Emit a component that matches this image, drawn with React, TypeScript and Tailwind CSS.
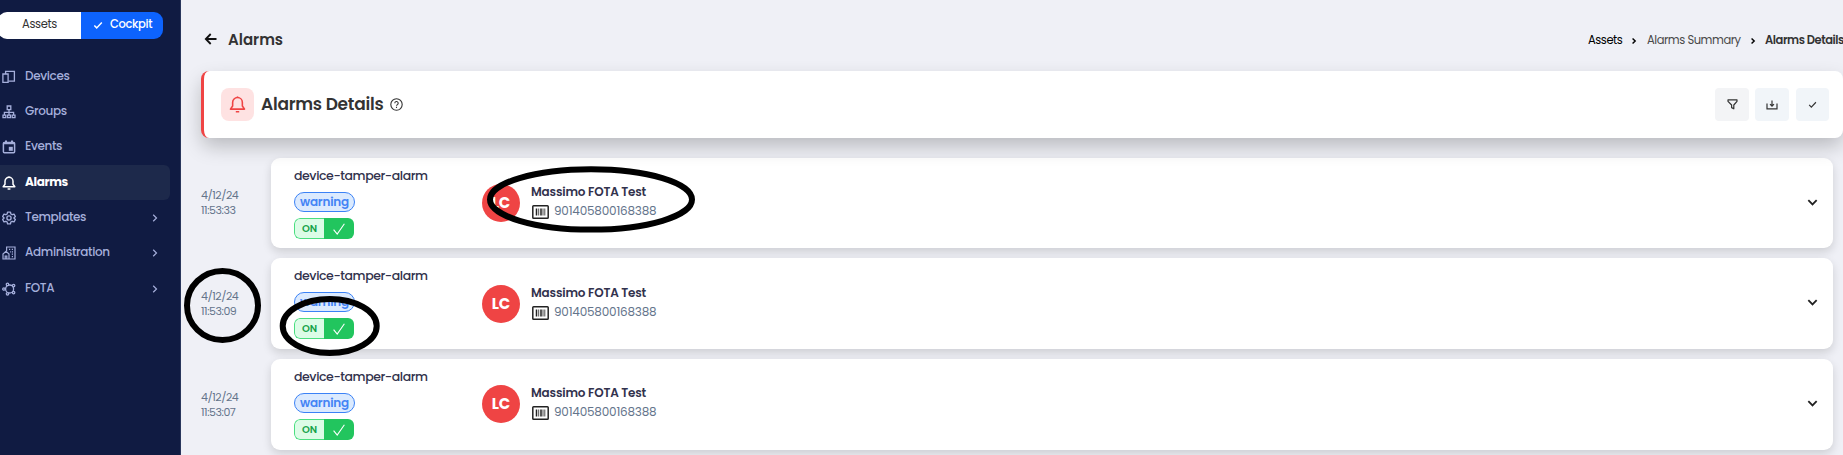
import type { ReactNode } from "react";

interface NavItem {
  label: string;
  icon: ReactNode;
  row: string;
  hasChildren?: boolean;
  active?: boolean;
}

interface Alarm {
  time: string;
  card: string;
  avatar: string;
  device: string;
}

const DevicesIcon = () => (
  <svg width="14" height="14" viewBox="0 0 14 14" fill="none" stroke="currentColor" strokeWidth="1.3">
    <path d="M3.6 4V1.3h8.8v9.8H6.4" />
    <path d="M.9 4h5.2v8.4H.9z" />
  </svg>
);

const GroupsIcon = () => (
  <svg width="14" height="14" viewBox="0 0 14 14" fill="none" stroke="currentColor" strokeWidth="1.3">
    <path d="M5.2 1h3.6v3.6H5.2zM7 4.600V10M2.400 10V7.300h9.200V10" />
    <path d="M1 10.200h2.800v2.400H1zM5.600 10.200h2.800v2.400H5.600zM10.200 10.200H13v2.400h-2.800z" />
  </svg>
);

const EventsIcon = () => (
  <svg width="14" height="14" viewBox="0 0 14 14" fill="none" stroke="currentColor" strokeWidth="1.5">
    <rect x="1.4" y="2.4" width="11.2" height="10.4" rx="1" />
    <path d="M1.4 3.2h11.2M4 .6v2M10 .6v2" strokeWidth="2" />
    <path d="M6.8 6.8h4v4h-4z" fill="currentColor" stroke="none" />
  </svg>
);

const BellIcon = ({ size = 14, width = 1.5 }: { size?: number; width?: number }) => (
  <svg width={size} height={size} viewBox="0 0 14 14" fill="none" stroke="currentColor" strokeWidth={width} strokeLinejoin="round">
    <path d="M7 1.3a4 4 0 0 0-4 4v2.900L1.200 10.800h11.600L11 8.200V5.300a4 4 0 0 0-4-4z" />
    <path d="M7 1.3V.5M5.600 12.900h2.800" />
  </svg>
);

const GearIcon = () => (
  <svg width="14" height="14" viewBox="0 0 24 24" fill="none" stroke="currentColor" strokeWidth="2.3" strokeLinejoin="round">
    <path d="M9.500 1.800h5l.7 3.300 2.200 1.300 3.200-1.100 2.300 4.200L20.400 12l2.500 2.500-2.300 4.200-3.200-1.100-2.200 1.300-.7 3.300h-5l-.7-3.300-2.200-1.300-3.200 1.100-2.300-4.200L3.600 12 1.100 9.500l2.300-4.200 3.200 1.100 2.200-1.300z" />
    <circle cx="12" cy="12" r="3.6" />
  </svg>
);

const BuildingIcon = () => (
  <svg width="14" height="14" viewBox="0 0 14 14" fill="none" stroke="currentColor" strokeWidth="1.2">
    <path d="M4.600 5V1h8.400v12H1V8l3-2.600L7 8v5" />
    <path d="M3.200 13v-3h1.600v3M7 3.400h1.200M9.800 3.400H11M8 5.800h.8M9.800 5.800H11M9.800 8.200H11M9.800 10.600H11" />
  </svg>
);

const FotaIcon = () => (
  <svg width="14" height="14" viewBox="0 0 14 14" fill="none" stroke="currentColor" strokeWidth="1.3">
    <circle cx="7.6" cy="7" r="4" />
    <g fill="#101b42">
      <circle cx="1.9" cy="7" r="1.2" />
      <circle cx="5.5" cy="2.4" r="1.2" />
      <circle cx="11.6" cy="3.6" r="1.2" />
      <circle cx="11.6" cy="10.6" r="1.2" />
      <circle cx="5.5" cy="11.8" r="1.2" />
    </g>
  </svg>
);

const Chevron = ({ className = "", width = 1.5 }: { className?: string; width?: number }) => (
  <svg className={className} viewBox="0 0 10 10" fill="none" stroke="currentColor" strokeWidth={width}>
    <path d="M3.2 1.8 6.5 5 3.2 8.2" />
  </svg>
);

const Check = ({ className = "", width = 1.5 }: { className?: string; width?: number }) => (
  <svg className={className} viewBox="0 0 10 10" fill="none" stroke="currentColor" strokeWidth={width}>
    <path d="M1.3 5.5 3.7 7.9 8.8 2.5" />
  </svg>
);

const navItems: NavItem[] = [
  { label: "Devices", icon: <DevicesIcon />, row: "h-[35px]" },
  { label: "Groups", icon: <GroupsIcon />, row: "h-[35px]" },
  { label: "Events", icon: <EventsIcon />, row: "h-[36px]" },
  { label: "Alarms", icon: <BellIcon />, row: "h-[35px]", active: true },
  { label: "Templates", icon: <GearIcon />, row: "h-[35px]", hasChildren: true },
  { label: "Administration", icon: <BuildingIcon />, row: "h-[36px]", hasChildren: true },
  { label: "FOTA", icon: <FotaIcon />, row: "h-[35px]", hasChildren: true },
];

const alarms: Alarm[] = [
  { time: "11:53:33", card: "h-[90px]", avatar: "mt-[26px]", device: "pt-[25px]" },
  { time: "11:53:09", card: "h-[91px]", avatar: "mt-[27px]", device: "pt-[26px]" },
  { time: "11:53:07", card: "h-[91px]", avatar: "mt-[26px]", device: "pt-[25px]" },
];

function Sidebar() {
  return (
    <aside className="h-full w-[181px] shrink-0 border-r border-[#29365c] bg-[#101b42] pt-3">
      <div className="-ml-0.5 flex h-[27px] w-[165px] overflow-hidden rounded-[9px] text-[11.5px] leading-none tracking-[-0.35px]">
        <div className="flex flex-1 items-center bg-white pb-px pl-6 text-[#333]">Assets</div>
        <div className="flex w-[82px] items-center bg-[#0d63fd] pb-px pl-3 font-medium text-white">
          <Check className="mb-px size-[10px]" />
          <span className="ml-[7px]">Cockpit</span>
        </div>
      </div>
      <nav className="mt-5 w-[170px]">
        {navItems.map((item) => (
          <div
            key={item.label}
            className={`flex items-center rounded-r-md pr-2.5 pl-0.5 text-[12px] tracking-[-0.36px] ${item.row} ${
              item.active ? "bg-[#1d294b] font-bold text-white" : "font-medium text-[#a5afdb]"
            }`}
          >
            {item.icon}
            <span className="ml-[9px] pb-0.5">{item.label}</span>
            {item.hasChildren && <Chevron className="ml-auto size-[10px]" width={1.2} />}
          </div>
        ))}
      </nav>
    </aside>
  );
}

function TopBar() {
  return (
    <div className="flex h-[71px] items-center pt-2 pl-[3px] text-[#333]">
      <svg className="mb-px" width="13" height="12" viewBox="0 0 13 12" fill="none" stroke="#111" strokeWidth="1.8">
        <path d="M12.500 6H2M6.700 1 1.800 6l4.900 5" />
      </svg>
      <h1 className="mt-0.5 ml-[11px] text-[15px] font-semibold">Alarms</h1>
      <div className="ml-auto flex shrink-0 items-center pt-0.5 text-[11.5px] tracking-[-0.45px] whitespace-nowrap">
        <span className="w-[42px] text-black">Assets</span>
        <Chevron className="mr-[9px] size-2 shrink-0 text-black" width={1.8} />
        <span className="w-[102px] text-[#4a4a4a]">Alarms Summary</span>
        <Chevron className="mr-2 size-2 shrink-0 text-black" width={1.8} />
        <span className="w-[78px] font-semibold">Alarms Details</span>
      </div>
    </div>
  );
}

function PageBanner() {
  return (
    <div className="relative flex h-[67px] items-center rounded-lg border-l-3 border-[#ef4444] bg-white pr-3.5 pl-[17px] shadow-[0_9px_20px_-1px_rgba(0,0,0,0.23)]">
      <div className="flex size-[33px] items-center justify-center rounded-lg bg-[#fee2e2] text-[#ef4444]">
        <BellIcon size={17} width={1.3} />
      </div>
      <h2 className="ml-[7px] text-[17px] font-semibold tracking-[-0.25px] text-[#333]">Alarms Details</h2>
      <svg className="ml-[7px]" width="13" height="13" viewBox="0 0 13 13" fill="none" stroke="#333" strokeWidth="1.1">
        <circle cx="6.5" cy="6.5" r="5.7" />
        <path d="M4.8 5.2a1.700 1.700 0 1 1 2.500 1.500c-.6.300-.8.500-.8 1.100M6.500 8.800v1.100" />
      </svg>
      <div className="ml-auto flex text-[#333]">
        <div className="flex h-[33px] w-[34px] items-center justify-center rounded bg-[#f3f4f6]">
          <svg width="11" height="11" viewBox="0 0 11 11" fill="none" stroke="currentColor" strokeWidth="1.2" strokeLinejoin="round">
            <path d="M1 .8h9v1.500L6.800 6v3.800L4.600 8.600V6L1 2.300z" />
          </svg>
        </div>
        <div className="ml-1.5 flex h-[33px] w-[34px] items-center justify-center rounded bg-[#f1f5f9]">
          <svg width="12" height="10" viewBox="0 0 12 10" fill="none" stroke="currentColor" strokeWidth="1.2">
            <path d="M1 3.400V8.800h10V3.400M6 .4v5.800M4 4.200l2 2 2-2" />
          </svg>
        </div>
        <div className="ml-[7px] flex size-[33px] items-center justify-center rounded bg-[#f1f5f9]">
          <Check className="size-[9px]" width={1.3} />
        </div>
      </div>
    </div>
  );
}

function AlarmRow({ alarm }: { alarm: Alarm }) {
  return (
    <div className="flex items-center">
      <div className="w-[70px] text-[11px] leading-[15px] tracking-[-0.45px] text-[#64748b]">
        <p>4/12/24</p>
        <p>{alarm.time}</p>
      </div>
      <div className={`flex w-[1562px] rounded-[9px] bg-white pl-[23px] shadow-[0_4px_10px_rgba(0,0,0,0.14)] ${alarm.card}`}>
        <div className="w-[188px] pt-[9px]">
          <p className="text-[12.5px] leading-[18px] font-medium tracking-[-0.42px] whitespace-nowrap text-[#32324d]">
            device-tamper-alarm
          </p>
          <span className="mt-[7px] flex h-5 w-[61px] items-center justify-center rounded-full border border-[#3b82f6] bg-[#dbeafe] pb-px text-[12px] font-semibold tracking-[-0.2px] text-[#4484f5]">
            warning
          </span>
          <div className="mt-[6px] flex h-[21px] w-[60px] overflow-hidden rounded-md text-[10px]">
            <span className="flex w-[30px] items-center justify-center rounded-l-md border border-r-0 border-[#4ade80] bg-[#dcfce7] font-semibold text-[#16a34a]">
              ON
            </span>
            <span className="flex flex-1 items-center justify-center bg-[#22c55e] text-white">
              <svg width="12" height="12" viewBox="0 0 12 12" fill="none" stroke="currentColor" strokeWidth="1.1">
                <path d="M.6 6.600 4.200 11 11.400.8" />
              </svg>
            </span>
          </div>
        </div>
        <div
          className={`flex size-[38px] items-center justify-center rounded-full bg-[#ef4444] text-[15px] font-bold text-white ${alarm.avatar}`}
        >
          LC
        </div>
        <div className={`ml-[11px] ${alarm.device}`}>
          <p className="text-[12px] leading-[18px] font-semibold tracking-[-0.18px] text-[#32324d]">Massimo FOTA Test</p>
          <div className="flex h-5 items-center text-[12px] tracking-[-0.2px] text-[#64748b]">
            <svg className="mt-px mr-[5px] ml-[1px]" width="17" height="14" viewBox="0 0 17 14" fill="none" stroke="#222">
              <rect x=".8" y=".8" width="15.4" height="12.4" rx=".8" strokeWidth="1.5" />
              <path d="M4.500 3.500v7M9 3.500v7" strokeWidth="1.5" />
              <path d="M6.700 3.500v7M11 3.500v7M12.800 3.500v7" strokeWidth=".8" />
            </svg>
            901405800168388
          </div>
        </div>
        <Chevron className="mt-[38px] mr-[14px] ml-auto size-[13px] rotate-90 text-[#222]" width={1.4} />
      </div>
    </div>
  );
}

// Hand drawn rings laid over the page
function Annotations() {
  return (
    <svg className="pointer-events-none absolute inset-0" width="1843" height="455" fill="none" stroke="#000" strokeWidth="6">
      <ellipse cx="591" cy="199.4" rx="101" ry="30.2" />
      <ellipse cx="222.5" cy="305.4" rx="35.5" ry="34.5" />
      <ellipse cx="329.7" cy="326" rx="47" ry="27" />
    </svg>
  );
}

export default function App() {
  return (
    <div className="relative flex h-[455px] w-[1843px] overflow-hidden bg-[#eff0f6] font-['Poppins','Inter',sans-serif]">
      <Sidebar />
      <main className="min-w-0 flex-1 pl-5">
        <TopBar />
        <PageBanner />
        <div className="mt-5 flex flex-col gap-2.5">
          {alarms.map((alarm) => (
            <AlarmRow key={alarm.time} alarm={alarm} />
          ))}
        </div>
      </main>
      <Annotations />
    </div>
  );
}
